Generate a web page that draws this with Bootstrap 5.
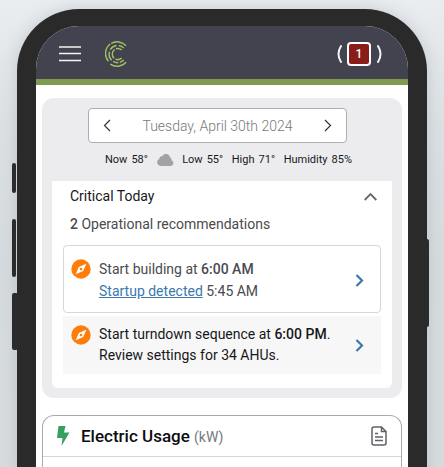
<!DOCTYPE html>
<html lang="en">
<head>
<meta charset="utf-8">
<meta name="viewport" content="width=device-width, initial-scale=1">
<title>Building Dashboard</title>
<link href="https://cdn.jsdelivr.net/npm/bootstrap@5.3.0/dist/css/bootstrap.min.css" rel="stylesheet">
<style>
body{font-family:Roboto,"Liberation Sans",sans-serif;font-size:14px;line-height:22px;color:#4a4b50;background:linear-gradient(180deg,#e9edf0 0,#dde1e4 120px,#d6dbde 260px,#d8dcdf 100%)}
.phone{margin:9px 17px 0;min-height:calc(100vh - 9px);background:#2a2a2a;border-radius:62px 62px 0 0;padding:17px 19px 0;box-shadow:0 0 16px rgba(120,125,140,.3)}
.side-key{position:absolute;background:#2a2b2b;border-radius:2px;width:4px}
.key-a{left:-5px;top:154px;height:30px}
.key-b{left:-5px;top:210px;height:58px}
.key-c{left:-5px;top:284px;height:57px;width:6px}
.key-d{right:-2px;top:230px;height:88px}
.screen{background:#fff;border-radius:43px 43px 0 0;overflow:hidden}
.topbar{background:#42434f;border-bottom:6px solid #7f9a51;height:59px;padding:2px 26px 0 22px}
.plain{background:none;border:0;padding:0;color:inherit;display:flex}
.alert-count{width:24px;height:24px;border:2px solid #fff;border-radius:4px;background:#891d17;color:#fff;font-size:12px;font-weight:500;line-height:20px;padding:0}
.content{padding:13px 6px 0}
.today{background:#ececee;border-radius:12px;padding:10px}
.datebar{margin:0 45px 0 36px;height:35px;border:1px solid #adaeb3;border-radius:4px;background:#fff;padding:0 14px;color:#77787d;font-weight:300}
.datebar button{color:#333}
.weather{font-size:11px;line-height:16px;color:#17181b;margin:9px 40px 13px 53px}
.critical{background:#fff;border-radius:0 0 6px 6px;padding:4px 11px 14px}
.critical-head{color:#17181b;padding:0 4px 0 7px}
.summary{padding:0 7px;margin:6px 0 10px}
.rec{padding:12px 16px 10px 7px;border:1px solid #d6d7da;border-radius:4px;gap:8px}
.rec-alt{border:0;border-radius:0;background:#f7f7f7;color:#17181b;margin-top:3px;padding:8px 17px 8px 8px;line-height:21px}
.rec b,.summary b{font-weight:500}
.rec a{color:#3c78ae}
.go{color:#3c7cb4}
.usage{border:1px solid #a9aaaf;border-bottom:0;border-radius:12px 12px 0 0;margin-top:17px;min-height:60px}
.usage-head{height:41px;border-bottom:1px solid #d6d7da;padding:0 14px 0 13px}
.usage-head h2{font-size:17px;line-height:22px;font-weight:500;color:#0c0d0f;margin:0 0 0 11px}
.usage-head h2 small{font-size:14px;font-weight:400;color:#77787d}
</style>
<script src="https://cdn.jsdelivr.net/npm/bootstrap@5.3.0/dist/js/bootstrap.bundle.min.js"></script>
</head>
<body class="overflow-hidden">
<div class="phone position-relative">
  <span class="side-key key-a"></span><span class="side-key key-b"></span><span class="side-key key-c"></span><span class="side-key key-d"></span>
  <div class="screen">
    <header class="topbar d-flex align-items-center">
      <button class="plain" type="button" aria-label="Menu"><svg width="23" height="17" viewBox="0 0 23 17" stroke="#f4f4f4" stroke-width="1.5"><path d="M1 2h22M1 8.500h22M1 15.500h22"/></svg></button>
      <a class="d-flex ms-4" href="#" aria-label="Home"><svg width="23" height="26" viewBox="0 0 24 27" fill="none" stroke="#a5bf63" stroke-width="1.500"><path d="M5.500 3.100A12.300 12.300 0 0 0 3.500 21M6.500 2.500A12.300 12.300 0 0 1 22 5M22 22A12.300 12.300 0 0 1 5.500 24"/><path d="M19.500 7.300A9 9 0 0 0 14.500 4.700M12 4.700A9 9 0 0 0 5.500 9M4.700 11A9 9 0 0 0 7 20M8.500 21.200A9 9 0 0 0 14 22.500M15.500 22.200A9 9 0 0 0 19.500 19.700"/><path d="M17.300 9.300A6 6 0 0 0 11.500 8M10 8.800A6 6 0 0 0 9.500 18M11 19A6 6 0 0 0 17.300 17.700"/></svg></a>
      <div class="d-flex align-items-center gap-1 ms-auto">
        <svg width="7" height="20" viewBox="0 0 7 20" fill="none" stroke="#f4f4f4" stroke-width="2" stroke-linecap="round"><path d="M5 2Q0 10 5 18"/></svg>
        <button class="alert-count" type="button" aria-label="1 alert">1</button>
        <svg width="7" height="20" viewBox="0 0 7 20" fill="none" stroke="#f4f4f4" stroke-width="2" stroke-linecap="round"><path d="M3 2Q8 10 3 18"/></svg>
      </div>
    </header>
    <main class="content">
      <section class="today">
        <div class="datebar d-flex align-items-center justify-content-between">
          <button class="plain" type="button" aria-label="Previous day"><svg width="8" height="13" viewBox="0 0 8 13" fill="none" stroke="currentColor" stroke-width="1.200"><path d="M7 1 1.500 6.500 7 12"/></svg></button>
          <span>Tuesday, April 30th 2024</span>
          <button class="plain" type="button" aria-label="Next day"><svg width="8" height="13" viewBox="0 0 8 13" fill="none" stroke="currentColor" stroke-width="1.200"><path d="M1 1l5.500 5.500L1 12"/></svg></button>
        </div>
        <div class="weather d-flex align-items-center justify-content-between text-nowrap">
          <span class="d-flex gap-1"><span>Now</span><span>58°</span></span>
          <svg width="17" height="12" viewBox="0 0 17 12" fill="#a2a2a4"><path d="M4 12a3.700 3.700 0 0 1-1.800-7A3.500 3.500 0 0 1 5.500 2 4 4 0 0 1 13 3.300a2.500 2.500 0 0 1 1.300 2.900A3 3 0 0 1 14 12z"/></svg>
          <span class="d-flex gap-1"><span>Low</span><span>55°</span></span>
          <span class="d-flex gap-1"><span>High</span><span>71°</span></span>
          <span class="d-flex gap-1"><span>Humidity</span><span>85%</span></span>
        </div>
        <div class="critical">
          <div class="critical-head d-flex align-items-center justify-content-between">
            <span>Critical Today</span>
            <button class="plain" type="button" aria-label="Collapse"><svg width="13" height="9" viewBox="0 0 13 9" fill="none" stroke="#66676b" stroke-width="1.800"><path d="M.7 8 6.500 2l5.800 6"/></svg></button>
          </div>
          <div class="summary"><b>2</b> Operational recommendations</div>
          <div class="rec d-flex align-items-center">
            <svg class="align-self-start flex-shrink-0" width="20" height="22" viewBox="0 0 20 22"><circle cx="10" cy="11" r="9.700" fill="#ff7d0a"/><path fill="#fff" fill-rule="evenodd" d="M15.300 5.700 12.200 13 4.700 16.300 7.800 9zM10 9.700a1.300 1.300 0 1 0 .01 0z"/></svg>
            <div class="flex-grow-1">Start building at <b>6:00 AM</b><br><a href="#">Startup detected</a> 5:45 AM</div>
            <a class="go d-flex" href="#" aria-label="Open start recommendation"><svg width="9" height="13" viewBox="0 0 9 13" fill="none" stroke="currentColor" stroke-width="2.200"><path d="M1.500 1 7 6.500 1.500 12"/></svg></a>
          </div>
          <div class="rec rec-alt d-flex align-items-center">
            <svg class="align-self-start flex-shrink-0" width="20" height="22" viewBox="0 0 20 22"><circle cx="10" cy="11" r="9.700" fill="#ff7d0a"/><path fill="#fff" fill-rule="evenodd" d="M15.300 5.700 12.200 13 4.700 16.300 7.800 9zM10 9.700a1.300 1.300 0 1 0 .01 0z"/></svg>
            <div class="flex-grow-1">Start turndown sequence at <b>6:00 PM</b>.<br>Review settings for 34 AHUs.</div>
            <a class="go d-flex" href="#" aria-label="Open turndown recommendation"><svg width="9" height="13" viewBox="0 0 9 13" fill="none" stroke="currentColor" stroke-width="2.200"><path d="M1.500 1 7 6.500 1.500 12"/></svg></a>
          </div>
        </div>
      </section>
      <section class="usage">
        <div class="usage-head d-flex align-items-center">
          <svg width="14" height="20" viewBox="0 0 14 20" fill="#36a063"><path d="M2.500 0h7L8 6.500h5.500L5.500 20 6.500 12H1z"/></svg>
          <h2>Electric Usage <small>(kW)</small></h2>
          <button class="plain ms-auto" type="button" aria-label="Report"><svg width="16" height="20" viewBox="0 0 16 20" fill="none" stroke="#606165" stroke-width="1.500"><path d="M10.500 1H3Q1 1 1 3v14q0 2 2 2h10q2 0 2-2V5.500zV5.500H15M4 7.500h3M4 11h8M4 14.500h8"/></svg></button>
        </div>
      </section>
    </main>
  </div>
</div>
</body>
</html>
